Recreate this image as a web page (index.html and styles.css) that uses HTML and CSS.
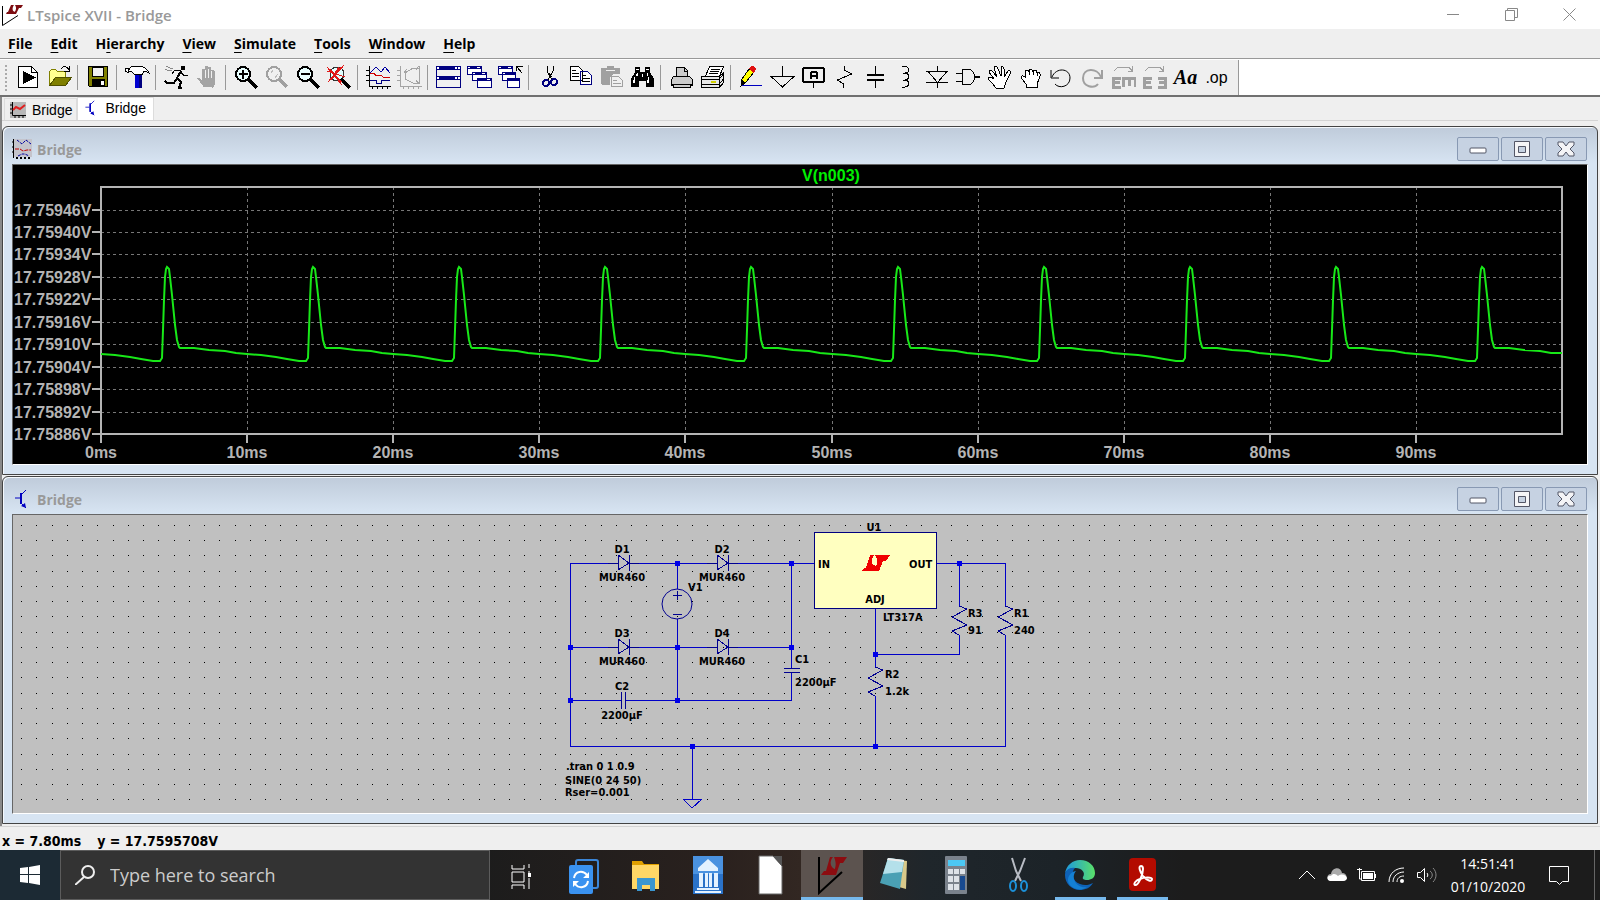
FILE: index.html
```html
<!DOCTYPE html>
<html lang="en">
<head>
    <meta charset="UTF-8">
    <meta name="viewport" content="width=device-width, initial-scale=1.0">
    <title>LTspice XVII - Bridge</title>
    <link rel="stylesheet" href="styles.css">
</head>
<body>
    <!-- Shared symbols -->
    <svg class="defs" width="0" height="0" aria-hidden="true">
        <symbol id="lt-logo" viewBox="0 0 22 22">
            <path d="M1.500 2v19.500L17 11.500" fill="none" stroke="#000"/>
            <path d="M10 1h3c-2 3-2 6 1 7l-1 2H5l1-2h1zM14 1h8l-2 3h-2l-3 6h-3c3-3 4-6 2-9z" fill="#7d0c10"/>
        </symbol>
        <symbol id="ic-min" viewBox="0 0 18 18">
            <rect x="1" y="8" width="16" height="5" rx="1" fill="#fff" stroke="#535666"/>
        </symbol>
        <symbol id="ic-max" viewBox="0 0 18 18">
            <path d="M1.500 1.500h15v15h-15zM5.500 6.500v6h7v-6z" fill="#f4f4f6" fill-rule="evenodd" stroke="#535666"/>
        </symbol>
        <symbol id="ic-close" viewBox="0 0 18 18">
            <path d="M1 2h5l3 4 3-4h5v3l-4 4 4 4v3h-5l-3-4-3 4H1v-3l4-4-4-4z" fill="#f4f4f6" stroke="#535666" stroke-linejoin="round"/>
        </symbol>
        <symbol id="ic-npn" viewBox="0 0 16 20">
            <path d="M1 9h5M12 1L7 6v8l5 5" fill="none" stroke="#0000c0" stroke-width="1"/>
            <path d="M6 4h2v11H6zM12 19l-1-5-4 3z" fill="#0000c0"/>
        </symbol>
    </svg>

    <header class="titlebar">
        <svg class="app-icon"><use href="#lt-logo"/></svg>
        <h1 class="app-title">LTspice XVII - Bridge</h1>
        <button class="sys-btn" aria-label="Minimize"><svg viewBox="0 0 13 13"><path d="M0 6.500h12"/></svg></button>
        <button class="sys-btn" aria-label="Restore"><svg viewBox="0 0 13 13"><path d="M.5 2.500h9v10h-9zM2.500 2.500v-2h10v9h-3"/></svg></button>
        <button class="sys-btn" aria-label="Close"><svg viewBox="0 0 13 13"><path d="M.5.5l12 12M12.500.5l-12 12"/></svg></button>
    </header>

    <nav class="menubar">
        <button><u>F</u>ile</button>
        <button><u>E</u>dit</button>
        <button>H<u>i</u>erarchy</button>
        <button><u>V</u>iew</button>
        <button><u>S</u>imulate</button>
        <button><u>T</u>ools</button>
        <button><u>W</u>indow</button>
        <button><u>H</u>elp</button>
    </nav>

    <div class="toolrow">
        <div class="toolbar">
            <button aria-label="New schematic"><svg viewBox="0 0 25 25"><path d="M2.500 1.500h13l6 6v15h-19z" fill="#fff" stroke="#000"/><path d="M15.500 1.500v6h6" fill="none" stroke="#000"/><path d="M7 6v13l13-6.500z"/></svg></button>
            <button aria-label="Open"><svg viewBox="0 0 25 25"><path d="M2.500 19.500v-13l2-2h4l2 2h8v5" fill="#ffff90" stroke="#808000"/><path d="M2.500 20.500l6-8h16l-6 8z" fill="#808000" stroke="#505000"/><path d="M14 4c3-4 6-3 8 1M22 1v5h-5" fill="none" stroke="#000"/></svg></button>
            <span class="sep"></span>
            <button aria-label="Save"><svg viewBox="0 0 25 25"><path d="M2.500 1.500h19v20h-18l-1-1z" fill="#808000" stroke="#000"/><path d="M6.500 2h11v9h-11z" fill="#f0f0f0" stroke="#000"/><path d="M6 14h13v7H6z"/><path d="M15 16h3v4h-3z" fill="#fff"/></svg></button>
            <span class="sep"></span>
            <button aria-label="Control panel"><svg viewBox="0 0 25 25"><path d="M10 9h7v14h-7z" fill="#0000d0"/><path d="M14 9h3v14h-3z" fill="#000080"/><path d="M.5 6V3.500h3V5l3-3.500h9c4 0 7 3 9 7-2-2-4-2-6-2l-1 2.500H9L6.500 6.500h-3L3 8z" fill="#fff" stroke="#000"/></svg></button>
            <span class="sep"></span>
            <button aria-label="Run"><svg viewBox="0 0 25 25"><path d="M17 1h4v4h-4z"/><path d="M17 6l-4 7 4 4-2 6h3M13 13l-3 5H3l-2-2" fill="none" stroke="#000" stroke-width="2"/><path d="M17 6l-6-1-3 4M17 7l3 4 4-1" fill="none" stroke="#000"/><path d="M2 1c3 2 4 3 7 2M1 4c3 2 5 2 7 1" fill="none" stroke="#888"/></svg></button>
            <button aria-label="Halt"><svg viewBox="0 0 25 25"><path d="M8 22c-2-2-4-5-6-8 1-2 3-1 5 1V5c1-2 2-2 3 0V2c1-2 3-2 3 0v1c1-2 3-1 3 1v2c1-2 4-1 4 1v10c0 3-1 4-2 6H8z" fill="#a4a4a4"/><path d="M10 5v8M13 4v9M16 6v7M2 14l6 8h9" fill="none" stroke="#f0f0f0"/></svg></button>
            <span class="sep"></span>
            <button aria-label="Zoom in"><svg viewBox="0 0 25 25"><circle cx="9" cy="9" r="7" fill="#e8ffff" stroke="#000" stroke-width="2"/><path d="M5 9h9M9 5v9" stroke="#000" stroke-width="2"/><path d="M14 14l9 9" stroke="#000" stroke-width="4"/></svg></button>
            <button aria-label="Pan"><svg viewBox="0 0 25 25"><circle cx="9" cy="9" r="7" fill="none" stroke="#a0a0a0" stroke-width="2"/><path d="M14 14l8 8" stroke="#a0a0a0" stroke-width="4"/><path d="M6 8l2-3M10 13l3-4" stroke="#bbb"/></svg></button>
            <button aria-label="Zoom out"><svg viewBox="0 0 25 25"><circle cx="9" cy="9" r="7" fill="#e8ffff" stroke="#000" stroke-width="2"/><path d="M5 9h9" stroke="#000" stroke-width="2"/><path d="M14 14l9 9" stroke="#000" stroke-width="4"/></svg></button>
            <button aria-label="Zoom full extents"><svg viewBox="0 0 25 25"><circle cx="10" cy="9" r="7" fill="#e0ffff" stroke="#333"/><path d="M14 14l9 9" stroke="#000" stroke-width="4"/><path d="M0 2l15 18M17 0L1 17M0 6l18 6M12 2L4 14" fill="none" stroke="#e01818"/><path d="M2 4l12 13M15 2L3 15" stroke="#e01818" stroke-width="2"/></svg></button>
            <span class="sep"></span>
            <button aria-label="Autorange"><svg viewBox="0 0 25 25"><path d="M3.500 1v20h21M0 5.500h3M0 10.500h3M0 15.500h3M6.500 21v3M11.500 21v3M16.500 21v3M21.500 21v3" fill="none" stroke="#000"/><path d="M4 8l6-6 5 5 4-5 5 6" fill="none" stroke="#0000a0"/><path d="M4 8.500h4l2 2h5l3 2h6" fill="none" stroke="#d00000"/><path d="M4 15.500h6v3h5v-3h9" fill="none" stroke="#000080"/></svg></button>
            <button aria-label="Plot limits"><svg viewBox="0 0 25 25"><path d="M3.500 1v20h21M0 5.500h3M0 10.500h3M0 15.500h3M6.500 21v3M11.500 21v3M16.500 21v3M21.500 21v3M22.500 1v18M22 3h-6L8 8v6l8 4h6M10 4l-3 4M22 1l-3 4M22 19l-3-4" fill="none" stroke="#a4a4a4"/></svg></button>
            <span class="sep"></span>
            <button aria-label="Tile windows"><svg viewBox="0 0 25 25"><path d="M.5 1.500h24v21H.5z" fill="#f0f0f0" stroke="#000080"/><path d="M0 1h25v4H0zM0 11h25v4H0z" fill="#000080"/><path d="M1 2h2v2H1zM19 2h2v2h-2zM22 2h2v2h-2zM1 12h2v2H1zM19 12h2v2h-2zM22 12h2v2h-2z" fill="#fff"/></svg></button>
            <button aria-label="Cascade windows"><svg viewBox="0 0 25 25"><path d="M.5 1.500h14v8H.5zM5.500 7.500h14v8h-14zM10.500 14.500h14v8h-14z" fill="#fff" stroke="#000080"/><path d="M0 1h15v3H0zM5 7h15v3H5zM10 13h15v3H10z" fill="#000080"/><path d="M1 2h2v1H1zM10 2h3v1h-3zM6 8h2v1H6zM15 8h3v1h-3zM20 14h3v1h-3z" fill="#fff"/></svg></button>
            <button aria-label="Close windows"><svg viewBox="0 0 25 25"><path d="M.5 1.500h14v8H.5zM4.500 7.500h13v8h-13zM9.500 14.500h12v8h-12z" fill="#fff" stroke="#000080"/><path d="M0 1h15v3H0zM4 7h14v3H4zM9 13h13v3H9z" fill="#000080"/><path d="M1 2h2v1H1zM10 2h3v1h-3zM5 8h2v1H5z" fill="#fff"/><path d="M24 8l-5-6M18.500 6V1.500h6" fill="none" stroke="#000"/></svg></button>
            <span class="sep"></span>
            <button aria-label="Cut"><svg viewBox="0 0 25 25"><path d="M10 1v5l5 9M16 1v5l-5 9" fill="none" stroke="#000"/><path d="M12 8l2 4" stroke="#000" stroke-width="2"/><circle cx="9" cy="18" r="3" fill="none" stroke="#000080" stroke-width="2"/><circle cx="17" cy="17" r="3" fill="none" stroke="#000080" stroke-width="2"/></svg></button>
            <button aria-label="Copy"><svg viewBox="0 0 25 25"><path d="M2.500 1.500h8l4 4v10h-12zM12.500 6.500h7l4 4v9h-11z" fill="#fff" stroke="#000"/><path d="M12.500 6.500h7l4 4v9h-11z" fill="none" stroke="#000080"/><path d="M4 5.500h4M4 8.500h7M4 11.500h7M14 10.500h4M14 13.500h8M14 16.500h8" stroke="#000"/></svg></button>
            <button aria-label="Paste"><svg viewBox="0 0 25 25"><path d="M2 3h6V1h7v2h6v6h-7l-3 3v8H3l-1-1z" fill="#a0a0a0"/><path d="M12.500 11.500h7l4 4v6h-11z" fill="#f0f0f0" stroke="#a0a0a0"/><path d="M7 5.500h9" stroke="#efefef"/><path d="M14 15.500h4M14 18.500h8" stroke="#a0a0a0"/></svg></button>
            <button aria-label="Find"><svg viewBox="0 0 25 25"><path d="M5 2h5v5h5V2h5v5l4 7v8h-8v-6h-7v6H1v-8l4-7z"/><path d="M6 4h3v1H6zM16 4h3v1h-3zM4 12h1v6H3zM18 12h1v6h-2zM12 9h1v3h-1zM7 8h1v3H6zM17 8h1v3h-1z" fill="#fff"/></svg></button>
            <span class="sep"></span>
            <button aria-label="Print"><svg viewBox="0 0 25 25"><path d="M7.500 11V2.500h8l3 3V11M4.500 11.500h16l3 3v6h-2v2h-17v-2h-2v-6z" fill="#ccc" stroke="#000"/><path d="M15.500 3v3h3M2 19.500h21" fill="none" stroke="#000"/></svg></button>
            <button aria-label="Print setup"><svg viewBox="0 0 25 25"><path d="M5.500 11l4-9.500h14L19.500 11" fill="#fff" stroke="#000"/><path d="M1.500 11.500h18l4-4v10l-4 5h-18z" fill="#e8e8e8" stroke="#000"/><path d="M2 14.500h17l4-5M2 19.500h17l4-5M11 4.500h9M10 6.500h9M9 8.500h9M19.500 12v10" fill="none" stroke="#000"/><path d="M11 16h5v2h-5z" fill="#d0d000"/></svg></button>
            <span class="sep"></span>
            <button aria-label="Wire"><svg viewBox="0 0 25 25"><path d="M3 14l7-10 5 3-8 10-5 4z" fill="#ffff00" stroke="#000"/><path d="M3 15l3 2-3 4H2z"/><path d="M10 4l2-3h3l2 3-2 4z" fill="#e01010"/><path d="M3 20.500h20" stroke="#0000c0"/></svg></button>
            <button aria-label="Ground"><svg viewBox="0 0 25 25"><path d="M12.500 1v11M1 11.500h23L12.500 22z" fill="none" stroke="#000"/></svg></button>
            <button aria-label="Label net"><svg viewBox="0 0 25 25"><rect x="2" y="3" width="21" height="14" rx="2" fill="#f0f0f0" stroke="#000" stroke-width="2"/><path d="M12.500 17v6" stroke="#000"/><path d="M10 14V8l1-1h4l1 1v6M10 11h6" fill="none" stroke="#000" stroke-width="2"/></svg></button>
            <button aria-label="Resistor"><svg viewBox="0 0 25 25"><path d="M12.500 1v4l7 4-14 6 6 4v4" fill="none" stroke="#000"/></svg></button>
            <button aria-label="Capacitor"><svg viewBox="0 0 25 25"><path d="M12.500 1v9M12.500 15v8" stroke="#000"/><path d="M4 10h17M4 15h17" stroke="#000" stroke-width="2"/></svg></button>
            <button aria-label="Inductor"><svg viewBox="0 0 25 25"><path d="M8 1.500h3c5 1 5 6 0 6.500h-2 2c5 1 5 6 0 7h-2 2c5 1 5 6 0 7H8" fill="none" stroke="#000"/></svg></button>
            <button aria-label="Diode"><svg viewBox="0 0 25 25"><path d="M12.500 1v5M1 6.500h22M3 6.500l9.500 11 9.500-11M1 17.500h22M12.500 17v6" fill="none" stroke="#000"/></svg></button>
            <button aria-label="Component"><svg viewBox="0 0 25 25"><path d="M0 8.500h6M0 16.500h6M6.500 4.500h6c8 0 8 15 0 15h-6z" fill="none" stroke="#000"/><path d="M18 12h6" stroke="#000" stroke-width="2"/></svg></button>
            <button aria-label="Move"><svg viewBox="0 0 25 25"><path d="M8 22c-2-4-5-5-7-8 0-3 4-1 6 0L2 7c0-3 3-2 4 0l4 5L7 3c1-3 4-1 4 1l3 7V3c1-3 3-1 3 1v8l4-6c2-1 3 1 2 3l-4 8-2 6H9z" fill="#fff" stroke="#000"/></svg></button>
            <button aria-label="Drag"><svg viewBox="0 0 25 25"><path d="M8 22v-3l-4-5c-2-3 0-4 3-2V7c1-3 3-2 4 0 0-4 3-4 4 0 1-3 4-2 4 1 2-1 4 0 3 3-1 4-2 5-3 8v3z" fill="#fff" stroke="#000"/><path d="M11 7v3M15 7v3M19 8v3" stroke="#000"/></svg></button>
            <button aria-label="Undo"><svg class="round" viewBox="0 0 25 25"><path d="M3 12C7 2 21 3 21 13c0 9-11 11-15 6" fill="none" stroke="#000"/><path d="M2 5v8h8" fill="none" stroke="#000"/></svg></button>
            <button aria-label="Redo"><svg class="round" viewBox="0 0 25 25"><path d="M21 12C17 2 3 3 3 13c0 9 11 11 15 6" fill="none" stroke="#a0a0a0" stroke-width="2"/><path d="M22 5v8h-8" fill="none" stroke="#a0a0a0" stroke-width="2"/></svg></button>
            <button aria-label="Rotate"><svg viewBox="0 0 25 25"><path d="M10 13H2v9h8M2 17h7M12 22v-9h12v9M18 13v8" fill="none" stroke="#a0a0a0" stroke-width="3"/><path d="M3 6l4-4h11l3 4M21.500 1v5h-5" fill="none" stroke="#a0a0a0"/></svg></button>
            <button aria-label="Mirror"><svg viewBox="0 0 25 25"><path d="M10 13H2v9h8M2 17h7M16 13h7v9h-7M23 17h-6" fill="none" stroke="#a0a0a0" stroke-width="3"/><path d="M3 6l4-4h11l3 4M21.500 1v5h-5" fill="none" stroke="#a0a0a0"/></svg></button>
            <button class="txt-aa">Aa</button>
            <button class="txt-op">.op</button>
        </div>
    </div>

    <main class="workspace">
        <div class="tabs">
            <button class="tab"><svg viewBox="0 0 16 16"><path d="M0 0h16v16H0z" fill="#b8b8b8"/><path d="M2.500 0v13.500H16M0 3h3M0 7h3M0 11h3M5 13v3M9 13v3M13 13v3" fill="none" stroke="#000"/><path d="M3 8l3-3 4 2 5-4" fill="none" stroke="#e02020" stroke-width="2"/></svg>Bridge</button>
            <button class="tab active"><svg viewBox="0 0 16 20"><use href="#ic-npn"/></svg>Bridge</button>
        </div>

        <section class="win">
            <div class="win-head">
                <svg class="win-icon" viewBox="0 0 20 20"><path d="M2 0h18v18H2z" fill="#c4c4cc"/><path d="M1.500 0v19M0 3h2M0 8h2M0 13h2" stroke="#000"/><path d="M4 19h16" stroke="#000" stroke-width="2" stroke-dasharray="2 2"/><path d="M5 1l5 4 4-4 5 4M6 17l4-2h3l4 2" fill="none" stroke="#0000a0" stroke-dasharray="3 1"/><path d="M3 10h5l3 2 4-1h4" fill="none" stroke="#c00000" stroke-dasharray="4 1"/></svg>
                <h2>Bridge</h2>
                <button aria-label="Minimize"><svg><use href="#ic-min"/></svg></button>
                <button aria-label="Maximize"><svg><use href="#ic-max"/></svg></button>
                <button aria-label="Close"><svg><use href="#ic-close"/></svg></button>
            </div>
            <svg class="view plot" id="plot" viewBox="13 165 1574 299"></svg>
        </section>

        <section class="win">
            <div class="win-head">
                <svg class="win-icon" viewBox="0 0 16 20"><use href="#ic-npn"/></svg>
                <h2>Bridge</h2>
                <button aria-label="Minimize"><svg><use href="#ic-min"/></svg></button>
                <button aria-label="Maximize"><svg><use href="#ic-max"/></svg></button>
                <button aria-label="Close"><svg><use href="#ic-close"/></svg></button>
            </div>
            <svg class="view schematic" viewBox="13 515 1574 298">
                <defs>
                    <pattern id="grid" x="21" y="525" width="61" height="61" patternUnits="userSpaceOnUse">
                        <path d="M0 0h1v1H0zM15 0h1v1h-1zM31 0h1v1h-1zM46 0h1v1h-1zM0 15h1v1H0zM15 15h1v1h-1zM31 15h1v1h-1zM46 15h1v1h-1zM0 30h1v1H0zM15 30h1v1h-1zM31 30h1v1h-1zM46 30h1v1h-1zM0 46h1v1H0zM15 46h1v1h-1zM31 46h1v1h-1zM46 46h1v1h-1z"/>
                    </pattern>
                    <g id="diode"><path class="part" d="M-10 0H0M11 0h10M0-8V7L11 0zM11-8V8"/></g>
                    <path id="res" class="part" d="M0 0l8 3-15 8 15 8-15 6 7 4"/>
                    <path id="dot" class="node" d="M-2-2h5v5h-5z"/>
                </defs>
                <rect x="13" y="515" width="1574" height="298" fill="url(#grid)"/>

                <!-- wires -->
                <path class="wire" d="M618 563h-48v183h435V635M629 563h88M728 563h86M677 563v26M677 619v81M570 647h48M629 647h88M728 647h63M791 563v105M791 672v28H626M570 700h51M936 563h69v43M959 563v43M959 635v19h-84M875 608v59M875 696v50M692 746v53"/>

                <!-- diodes -->
                <use href="#diode" x="618" y="563"/>
                <use href="#diode" x="717" y="563"/>
                <use href="#diode" x="618" y="647"/>
                <use href="#diode" x="717" y="647"/>

                <!-- source, capacitors, ground -->
                <circle class="part" cx="677" cy="604" r="15"/>
                <path class="part" d="M673 595h9M677 591v9M673 614h9"/>
                <path class="part" d="M784 668h16M784 672h16M621 692v17M625 692v17"/>
                <path class="part gnd" d="M683 799h19l-10 9z"/>

                <!-- resistors -->
                <use href="#res" x="959" y="606"/>
                <use href="#res" x="1005" y="606"/>
                <use href="#res" x="875" y="667"/>

                <!-- regulator -->
                <rect class="chip" x="814" y="532" width="122" height="76"/>
                <path d="M870 555h4c-4 5-3 10 2 11l-2 5h-12l2-3h2zM875 555h15l-4 6h-3l-4 10h-6c4-5 5-8 4-12z" fill="#f00000"/>

                <use href="#dot" x="570" y="647"/>
                <use href="#dot" x="570" y="700"/>
                <use href="#dot" x="677" y="563"/>
                <use href="#dot" x="677" y="647"/>
                <use href="#dot" x="677" y="700"/>
                <use href="#dot" x="791" y="563"/>
                <use href="#dot" x="791" y="647"/>
                <use href="#dot" x="959" y="563"/>
                <use href="#dot" x="875" y="654"/>
                <use href="#dot" x="875" y="746"/>
                <use href="#dot" x="692" y="746"/>

                <g class="mid">
                    <text x="622" y="553">D1</text>
                    <text x="722" y="553">D2</text>
                    <text x="622" y="581">MUR460</text>
                    <text x="722" y="581">MUR460</text>
                    <text x="622" y="637">D3</text>
                    <text x="722" y="637">D4</text>
                    <text x="622" y="665">MUR460</text>
                    <text x="722" y="665">MUR460</text>
                    <text x="622" y="690">C2</text>
                    <text x="622" y="719">2200µF</text>
                    <text x="874" y="531">U1</text>
                    <text x="875" y="603">ADJ</text>
                </g>
                <text x="688" y="591">V1</text>
                <text x="795" y="663">C1</text>
                <text x="795" y="686">2200µF</text>
                <text x="818" y="568">IN</text>
                <text x="909" y="568">OUT</text>
                <text x="883" y="621">LT317A</text>
                <text x="968" y="617">R3</text>
                <text x="968" y="634">91</text>
                <text x="1014" y="617">R1</text>
                <text x="1014" y="634">240</text>
                <text x="885" y="678">R2</text>
                <text x="885" y="695">1.2k</text>
                <text x="566" y="770">.tran 0 1 0.9</text>
                <text x="565" y="784">SINE(0 24 50)</text>
                <text x="565" y="796">Rser=0.001</text>
            </svg>
        </section>
    </main>

    <div class="statusbar"><span>x = 7.80ms</span><span>y = 17.7595708V</span></div>

    <footer class="taskbar">
        <button class="start" aria-label="Start"><svg viewBox="0 0 20 20"><path d="M0 3l8-1v7H0zM9 2l11-2v9H9zM0 10h8v8l-8-1zM9 10h11v10L9 18z" fill="#fff"/></svg></button>
        <label class="search">
            <svg viewBox="0 0 20 20"><circle cx="13" cy="7" r="6"/><path d="M9 12l-9 8"/></svg>
            <input type="text" placeholder="Type here to search" aria-label="Type here to search">
        </label>
        <div class="apps">
            <button aria-label="Task View"><svg viewBox="0 0 30 40"><path d="M5 10v4h12v-4M5 34v-4h12v4M5 17h12v10H5zM22 9v4M22 16v3M22 23v11" fill="none" stroke="#fff"/><path d="M21 18h3v4h-3z" fill="#fff"/></svg></button>
            <button aria-label="Sync"><svg viewBox="0 0 30 40"><rect x="7" y="5" width="22" height="28" rx="2" fill="none" stroke="#3b86d8" stroke-width="2"/><rect x="0" y="10" width="24" height="29" rx="2" fill="#3a92f0"/><path d="M5 23c1-7 9-8 13-3M19 26c-1 7-9 8-13 3" fill="none" stroke="#fff" stroke-width="2"/><path d="M20 17v6h-6zM4 32v-6h6z" fill="#fff"/></svg></button>
            <button aria-label="File Explorer"><svg viewBox="0 0 30 40"><path d="M1 6h10l2 3h15v8H1z" fill="#e0a000"/><path d="M1 10h27v24H1z" fill="#ffd766"/><path d="M6 36V23h18v13h-5v-6h-8v6z" fill="#3a96d0"/></svg></button>
            <button aria-label="Bank"><svg viewBox="0 0 30 40"><path d="M0 1h30v38H0z" fill="#2a72c8"/><path d="M0 1h30v18H0z" fill="#4a92e0"/><path d="M15 4l10 9v3H5v-3zM6 18h4v14H6zM12 18h3v14h-3zM16 18h3v14h-3zM21 18h4v14h-4zM4 33h22v2H4zM2 36h26v2H2z" fill="#e4f2ff"/></svg></button>
            <button aria-label="LibreOffice"><svg viewBox="0 0 30 40"><path d="M4 1h14l9 10v28H4z" fill="#fff" stroke="#666"/><path d="M18 1h9v10z" fill="#555"/></svg></button>
            <button class="running current" aria-label="LTspice"><svg viewBox="0 0 30 40"><path d="M2 2v36l23-21" fill="none" stroke="#000" stroke-width="2"/><path d="M13 2h3c-4 5-3 10 3 13l-2 5H4l3-4h2zM17 2h13l-4 6h-3l-4 12h-5c5-6 6-11 3-18z" fill="#8c0c10"/></svg></button>
            <button aria-label="Notepad"><svg viewBox="0 0 30 40"><path d="M20 5l8 1-1 28-7-2z" fill="#d9c98a"/><path d="M9 3l16 2-4 29L1 28z" fill="#4aa0b4"/><path d="M9 3l16 2-2 12L4 19z" fill="#b4e0ea"/><path d="M9 3l16 2v2L8 5z" fill="#eee"/></svg></button>
            <button aria-label="Calculator"><svg viewBox="0 0 30 40"><rect x="4" y="1" width="22" height="38" rx="1" fill="#7a828c"/><path d="M7 5h17v6H7z" fill="#4cc8f4"/><path d="M7 14h5v5H7zM13 14h5v5h-5zM19 14h5v5h-5zM7 21h5v6H7zM13 21h5v6h-5zM7 29h5v6H7zM13 29h5v6h-5z" fill="#dde2e8"/><path d="M19 21h5v14h-5z" fill="#184a90"/></svg></button>
            <button aria-label="Snipping Tool"><svg viewBox="0 0 30 40"><path d="M9 3l4 13 5 10M22 3l-5 13-5 10" fill="none" stroke="#b8bcc4" stroke-width="2"/><ellipse cx="10" cy="31" rx="3" ry="5" fill="none" stroke="#1c90d8" stroke-width="2"/><ellipse cx="21" cy="31" rx="3" ry="5" fill="none" stroke="#1c90d8" stroke-width="2"/></svg></button>
            <button class="running" aria-label="Edge"><svg viewBox="0 0 30 30"><defs><linearGradient id="edge" x1="0" x2="1"><stop offset="0" stop-color="#1c98e0"/><stop offset="1" stop-color="#5ae068"/></linearGradient></defs><path d="M0 14C1 5 8 0 15 0c9 0 15 6 15 13 0 5-4 7-8 7-3 0-5-1-4-3 3-5-2-9-7-9C6 8 1 10 0 14z" fill="url(#edge)"/><path d="M0 15c0-5 5-8 10-7-4 3-3 14 5 16 5 2 9 1 13-1-3 5-8 7-13 7C6 30 0 23 0 15z" fill="#0e62b8"/><path d="M11 11c-6 7 1 18 11 16-5 4-14 3-18-3-3-6 1-12 7-13z" fill="#1480d4"/></svg></button>
            <button class="running" aria-label="Acrobat"><svg viewBox="0 0 30 40"><rect x="2" y="3" width="27" height="33" rx="4" fill="#b30b00"/><path d="M14 11c-3 0-1 6 2 10 4 5 9 6 9 3 0-2-8-2-12 0-4 1-7 5-5 6 3 1 8-10 8-16 0-2-1-3-2-3z" fill="none" stroke="#fff" stroke-width="2"/></svg></button>
        </div>
        <div class="tray">
            <button aria-label="Show hidden icons"><svg viewBox="0 0 20 20"><path d="M2 14l8-8 8 8"/></svg></button>
            <button aria-label="OneDrive"><svg viewBox="0 0 20 20"><path d="M5 16c-6 0-6-7-1-7C5 2 14 1 15 8c6 0 6 8 1 8z" fill="#aaa" stroke="none"/><path d="M3 16c-4-1-3-6 1-5 2-3 5-2 7 0 4-3 8-1 9 2 0 2-2 3-4 3z" fill="#fff" stroke="none"/></svg></button>
            <button aria-label="Battery"><svg viewBox="0 0 20 20"><path d="M4.500 6.500h13v9h-13zM18.500 9v4M2.500 3v6M0 4.500h5M2.500 8v6h2"/><path d="M6 8h10v6H6z" fill="#fff" stroke="none"/></svg></button>
            <button aria-label="Network"><svg viewBox="0 0 20 20"><path d="M2 17C2 8 9 3 17 3M6 17c0-6 5-10 11-10M10 17c0-4 3-6 7-6"/><circle cx="15" cy="16" r="2" fill="#fff" stroke="none"/></svg></button>
            <button aria-label="Volume"><svg viewBox="0 0 20 20"><path d="M.5 7.500h3l4-4v13l-4-4h-3zM10 8c1 1 1 3 0 4"/><path d="M13 6c3 2 3 6 0 8M16 3c4 4 4 10 0 14" stroke="#888"/></svg></button>
            <time class="clock">14:51:41<br>01/10/2020</time>
            <button class="notif" aria-label="Notifications"><svg viewBox="0 0 20 20"><path d="M.5 1.500h19v15h-6l-3 3-3-3h-7z"/></svg></button>
        </div>
    </footer>

    <script src="script.js"></script>
</body>
</html>
```

FILE: styles.css
```css
* {
    box-sizing: border-box;
}
body {
    margin: 0;
    min-height: 100vh;
    display: flex;
    flex-direction: column;
    background: #efefef;
    font-family: "Open Sans", "Noto Sans", sans-serif;
    color: #000;
}
button {
    border: none;
    background: none;
    padding: 0;
    margin: 0;
    font: inherit;
    color: inherit;
    flex: none;
}
svg {
    display: block;
    flex: none;
}
.defs {
    position: absolute;
}

/* Title bar */
.titlebar {
    display: flex;
    align-items: center;
    height: 29px;
    padding: 0 2px 0 1px;
    background: #fff;
}
.app-icon {
    width: 22px;
    height: 22px;
}
.app-title {
    flex: 1;
    margin: 0 0 0 4px;
    font-size: 15px;
    font-weight: 600;
    color: #999;
}
.sys-btn {
    width: 58px;
    height: 29px;
    display: flex;
    align-items: center;
    justify-content: center;
}
.sys-btn svg {
    width: 13px;
    height: 13px;
    fill: none;
    stroke: #888;
}

/* Menu */
.menubar {
    display: flex;
    align-items: center;
    gap: 18px;
    height: 30px;
    padding-left: 8px;
    border-bottom: 1px solid #999;
    font-size: 14px;
    font-weight: 700;
}
.menubar u {
    text-underline-offset: 3px;
}

/* Toolbar */
.toolrow {
    height: 38px;
    padding-top: 1px;
    background: #fff;
    border-bottom: 2px solid #707070;
}
.toolbar {
    display: inline-flex;
    align-items: center;
    height: 35px;
    padding: 0 6px 0 5px;
    background: #efefef;
    border-right: 1px solid #999;
}
.toolbar::before {
    content: "";
    width: 2px;
    height: 26px;
    margin-right: 6px;
    background: linear-gradient(#aaa 2px, transparent 2px) 0 0 / 2px 4px;
}
.toolbar button {
    width: 31px;
    height: 31px;
    display: flex;
    align-items: center;
    justify-content: center;
}
.toolbar svg {
    width: 25px;
    height: 25px;
    shape-rendering: crispEdges;
}
.toolbar .round {
    shape-rendering: auto;
}
.sep {
    width: 8px;
    height: 25px;
    background: linear-gradient(#999, #999) 2px 0 / 1px 100% no-repeat;
}
.toolbar .txt-aa {
    font: italic 700 20px "Liberation Serif", serif;
}
.toolbar .txt-op {
    font: 16px "Liberation Sans", sans-serif;
}

/* Document area */
.workspace {
    padding: 0 2px 1px 0;
    border-left: 2px solid #8a8a8a;
}
.tabs {
    display: flex;
    align-items: flex-end;
    height: 24px;
    padding-left: 2px;
    margin-bottom: 5px;
    border-bottom: 1px solid #d4d4d4;
    font-family: "Liberation Sans", sans-serif;
    font-size: 14px;
}
.tab {
    display: flex;
    align-items: center;
    gap: 6px;
    height: 22px;
    padding: 0 4px 0 5px;
    border: 1px solid #dcdcdc;
    border-bottom: none;
}
.tab svg {
    width: 16px;
    height: 16px;
}
.tab.active {
    height: 23px;
    padding: 0 7px 3px 5px;
    background: #fff;
}
.win {
    margin-bottom: 1px;
    padding: 0 9px 9px;
    border: 1px solid #444;
    border-radius: 6px 6px 0 0;
    background: linear-gradient(#bfcbda, #d7e4f2 36px);
    box-shadow: inset 1px 1px 0 #f4f8fc;
}
.win-head {
    display: flex;
    align-items: center;
    gap: 2px;
    height: 37px;
    padding: 7px 1px 0 0;
}
.win-head h2 {
    flex: 1;
    margin: 0;
    padding: 1px 0 0 3px;
    font-size: 14px;
    font-weight: 700;
    color: #999;
}
.win-icon {
    width: 20px;
    height: 20px;
}
.win-head button {
    width: 42px;
    height: 24px;
    display: flex;
    align-items: center;
    justify-content: center;
    border: 1px solid #8899b3;
    border-radius: 2px;
    background: #c6d2e2;
}
.win-head button svg {
    width: 18px;
    height: 18px;
}
.view {
    width: 100%;
    height: auto;
    border: 1px solid #666;
    border-color: #666 #fff #fff #666;
}

/* Waveform */
.plot {
    background: #000;
    font: 700 16px "Liberation Sans", sans-serif;
}
.plot text {
    fill: #b4b4b4;
}
.plot .trace-name {
    fill: #00f000;
    text-anchor: middle;
}
.plot .axis {
    fill: none;
    stroke: #b4b4b4;
    stroke-width: 2;
    shape-rendering: crispEdges;
}
.plot .grid {
    fill: none;
    stroke: #777;
    stroke-dasharray: 3 3;
    shape-rendering: crispEdges;
}
.plot .trace {
    fill: none;
    stroke: #18e818;
    stroke-width: 2;
}
.plot .x-label {
    text-anchor: middle;
}

/* Schematic */
.schematic {
    background: #c0c0c0;
    font: 700 11px "DejaVu Sans Condensed", "DejaVu Sans", sans-serif;
}
.schematic path,
.schematic rect {
    shape-rendering: crispEdges;
}
.wire {
    fill: none;
    stroke: #0000c8;
}
.part {
    fill: none;
    stroke: #000090;
}
.gnd {
    stroke: #0000c8;
}
.node {
    fill: #0000e8;
}
.chip {
    fill: #ffffc0;
    stroke: #000080;
}
.mid {
    text-anchor: middle;
}

/* Status */
.statusbar {
    flex: 1;
    display: flex;
    align-items: center;
    gap: 16px;
    min-height: 24px;
    padding: 4px 0 0 2px;
    border-top: 1px solid #d4d4d4;
    font: 700 14px "DejaVu Sans Condensed", "DejaVu Sans", sans-serif;
}

/* Taskbar */
.taskbar {
    display: flex;
    height: 50px;
    background: linear-gradient(90deg, #1c1c1c 30%, #2a211e 45%, #322722 50%, #1f262b 58%, #1c2328 66%, #1c1c1c 74%);
    color: #fff;
}
.start {
    width: 60px;
    display: flex;
    align-items: center;
    justify-content: center;
    background: #1c2a34;
}
.start svg {
    width: 20px;
    height: 20px;
}
.search {
    display: flex;
    align-items: center;
    gap: 15px;
    width: 430px;
    padding: 0 14px;
    background: #333;
    border: 1px solid #5c5c5c;
}
.search svg {
    width: 20px;
    height: 20px;
    fill: none;
    stroke: #eee;
    stroke-width: 2;
}
.search input {
    flex: 1;
    min-width: 0;
    padding: 0;
    border: none;
    outline: none;
    background: none;
    font: 18px "Open Sans", "Noto Sans", sans-serif;
    color: #ccc;
}
.search input::placeholder {
    color: #ccc;
    opacity: 1;
}
.apps {
    display: flex;
    padding-left: 1px;
}
.apps button {
    width: 62px;
    display: flex;
    align-items: center;
    justify-content: center;
}
.apps svg {
    width: 30px;
    height: 40px;
}
.apps .running {
    background: linear-gradient(#76b9ed, #76b9ed) center bottom / 51px 3px no-repeat;
}
.apps .current {
    background: linear-gradient(#76b9ed, #76b9ed) center bottom / 100% 3px no-repeat, #5c534f;
}
.tray {
    display: flex;
    align-items: center;
    margin-left: auto;
    margin-right: 5px;
    padding-right: 25px;
    border-right: 1px solid #666;
}
.tray button {
    width: 30px;
    display: flex;
    justify-content: center;
}
.tray svg {
    width: 20px;
    height: 20px;
    fill: none;
    stroke: #fff;
}
.clock {
    width: 92px;
    font-size: 14px;
    line-height: 23px;
    text-align: center;
}
.tray .notif {
    width: 20px;
    margin-left: 15px;
}
```

FILE: script.js
```js
const plot = document.getElementById('plot');

const LEFT = 101, RIGHT = 1562, TOP = 187, BOTTOM = 434;
const xAt = ms => Math.round(LEFT + ms * (RIGHT - LEFT) / 100);

let grid = '';
let axis = `M${LEFT} ${TOP}H${RIGHT}V${BOTTOM}H${LEFT}z`;
let labels = '';

// Voltage scale, 60uV per division
for (let i = 0; i <= 10; i++) {
    const y = Math.round(BOTTOM - i * 22.45);
    axis += `M${LEFT - 9} ${y}h9`;
    if (i > 0) grid += `M${LEFT} ${y + 0.5}H${RIGHT}`;
    labels += `<text x="14" y="${y + 6}">17.75${886 + i * 6}V</text>`;
}

// Time scale
for (let ms = 0; ms < 100; ms += 10) {
    const x = xAt(ms);
    axis += `M${x} ${BOTTOM}v9`;
    if (ms > 0) grid += `M${x + 0.5} ${TOP}V${BOTTOM}`;
    labels += `<text class="x-label" x="${x}" y="458">${ms}ms</text>`;
}

// One ripple period: [offset, y]
const ripple = [
    [0, 354], [14, 355], [29, 357], [40, 359], [52, 361], [59, 361], [61, 358], [62, 330],
    [63, 300], [64, 277], [65, 269], [66, 267], [68, 269], [69, 277], [71, 295], [74, 325],
    [76, 340], [78, 347], [79, 348], [93, 348], [108, 350], [124, 351], [135, 353]
];
const points = [];
for (let i = 0; i < 10; i++) {
    ripple.forEach(([dx, y]) => points.push(`${xAt(i * 10) + dx},${y}`));
}
points.push(`${RIGHT},353`);

plot.innerHTML = `
    <path class="grid" d="${grid}"/>
    <path class="axis" d="${axis}"/>
    <polyline class="trace" points="${points.join(' ')}"/>
    <text class="trace-name" x="831" y="181">V(n003)</text>
    ${labels}`;
```
